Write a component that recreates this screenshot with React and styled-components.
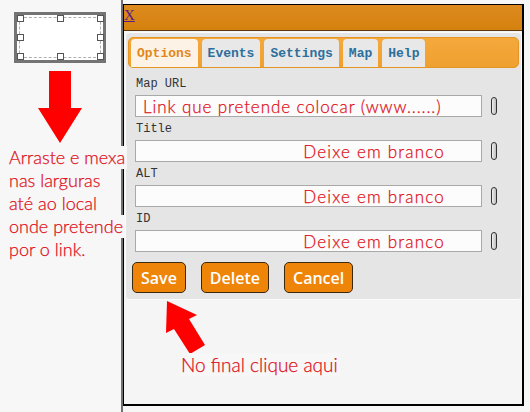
import React from "react";
import styled, { createGlobalStyle } from "styled-components";

const GlobalStyle = createGlobalStyle`
  body {
    margin: 0;
    background: #f7f7f7;
    font-family: "Liberation Sans", Arial, sans-serif;
  }
`;

const Page = styled.div`
  position: relative;
  display: flex;
  align-items: flex-start;
  width: 530px;
  height: 412px;
  overflow: hidden;
`;

const LeftCol = styled.div`
  width: 121px;
  flex-shrink: 0;
  display: flex;
  flex-direction: column;
  padding: 12px 0 0 14px;
  box-sizing: border-box;
`;

const SelectBox = styled.div`
  position: relative;
  width: 92px;
  height: 51px;
  border: 3px solid #747474;
  box-sizing: border-box;
  background: #fff;
`;

const DashedInner = styled.div`
  position: absolute;
  inset: 2px;
  border: 1px dashed #b0b0b0;
`;

const Handle = styled.span`
  position: absolute;
  width: 5px;
  height: 5px;
  background: #fff;
  border: 1px solid #555;
  left: ${(p) => p.x};
  top: ${(p) => p.y};
`;

const DownArrow = styled.svg`
  margin: 8px 0 0 24px;
  display: block;
`;

const DialogWrap = styled.div`
  flex-shrink: 0;
  border-left: 2px solid #707070;
  padding-top: 4px;
  height: 412px;
  box-sizing: border-box;
`;

const Dialog = styled.div`
  width: 401px;
  height: 402px;
  border-top: 1px solid #000;
  border-right: 2px solid #000;
  border-bottom: 2px solid #000;
  border-left: 1px solid #000;
  box-sizing: border-box;
  background: #f5f5f5;
  display: flex;
  flex-direction: column;
`;

const TitleBar = styled.div`
  height: 26px;
  flex-shrink: 0;
  background: linear-gradient(#dd8b1f, #d5810f);
  border-bottom: 1px solid #5a3a0e;
  display: flex;
  align-items: flex-start;
  padding-top: 2px;
  box-sizing: border-box;
`;

const CloseLink = styled.a`
  font-family: "Liberation Serif", "Times New Roman", serif;
  font-size: 15px;
  color: #551a8b;
  text-decoration: underline;
  cursor: pointer;
`;

const Panel = styled.div`
  margin: 1px 0 0 1px;
  height: 268px;
  flex-shrink: 0;
  background: #e5e5e5;
  border: 1px solid #fbfbfb;
  border-radius: 4px;
  padding: 4px 2px 0 2px;
  box-sizing: border-box;
`;

const TabBar = styled.div`
  height: 31px;
  display: flex;
  align-items: flex-end;
  gap: 4px;
  padding-left: 2px;
  background: linear-gradient(#f5a93c, #efa02f);
  border: 1px solid #e49523;
  border-radius: 5px;
  box-sizing: border-box;
`;

const Tab = styled.div`
  height: 28px;
  padding: 0 6px;
  display: flex;
  align-items: center;
  font-family: "Liberation Mono", "Courier New", monospace;
  font-weight: bold;
  font-size: 13px;
  color: ${(p) => (p.active ? "#e3871a" : "#2d6f9c")};
  background: ${(p) => (p.active ? "#fcf3e6" : "#e8e8e8")};
  border-radius: 4px 4px 0 0;
`;

const Fields = styled.div`
  display: flex;
  flex-direction: column;
  gap: 2px;
  padding: 6px 0 0 7px;
`;

const Field = styled.div`
  display: flex;
  flex-direction: column;
`;

const Label = styled.div`
  height: 21px;
  line-height: 21px;
  padding-left: 1px;
  font-family: "Liberation Mono", "Courier New", monospace;
  font-size: 12px;
  color: #333;
`;

const InputRow = styled.div`
  display: flex;
  align-items: center;
  gap: 9px;
`;

const TextBox = styled.div`
  width: 347px;
  height: 22px;
  box-sizing: border-box;
  background: #fcfcfc;
  border: 1px solid #a9a9a9;
  display: flex;
  align-items: center;
  justify-content: ${(p) => (p.right ? "flex-end" : "flex-start")};
  padding: ${(p) => (p.right ? "0 36px 0 0" : "0 0 0 7px")};
  font-family: Lato, "Open Sans", sans-serif;
  font-weight: 300;
  font-size: 17px;
  letter-spacing: ${(p) => (p.right ? "1.2px" : "0.9px")};
  color: #e0101a;
  -webkit-text-stroke: 0.25px #e0101a;
  white-space: nowrap;
  overflow: hidden;
`;

const Grip = styled.span`
  width: 6px;
  height: 18px;
  box-sizing: border-box;
  border: 1px solid #333;
  border-radius: 3px;
  background: linear-gradient(90deg, #f0f0f0, #bdbdbd);
`;

const Buttons = styled.div`
  display: flex;
  gap: 15px;
  margin-top: 10px;
  padding-left: 4px;
`;

const Button = styled.button`
  height: 31px;
  padding: 0 8px;
  background: #ee8408;
  border: 1px solid #3a2910;
  border-radius: 5px;
  color: #fff;
  font-family: "Open Sans", sans-serif;
  font-weight: 600;
  font-size: 16px;
`;

const Note = styled.div`
  position: absolute;
  left: ${(p) => p.x}px;
  top: ${(p) => p.y}px;
  display: flex;
  flex-direction: column;
  align-items: flex-start;
  font-family: Lato, "Open Sans", sans-serif;
  font-weight: 300;
  font-size: ${(p) => p.size}px;
  line-height: 23px;
  color: #e0101a;
  -webkit-text-stroke: 0.25px #e0101a;
  white-space: pre;
`;

const NoteLine = styled.span`
  background: #f7f7f7;
  padding-right: 2px;
`;

const UpArrow = styled.svg`
  position: absolute;
  left: 160px;
  top: 295px;
`;

const fields = [
  { label: "Map URL", text: "Link que pretende colocar (www......)" },
  { label: "Title", text: "Deixe em branco", right: true },
  { label: "ALT", text: "Deixe em branco", right: true },
  { label: "ID", text: "Deixe em branco", right: true },
];

const handles = [
  ["0px", "0px"], ["40px", "0px"], ["80px", "0px"],
  ["0px", "19px"], ["80px", "19px"],
  ["0px", "38px"], ["40px", "38px"], ["80px", "38px"],
];

const noteLines = ["Arraste e mexa", "nas larguras", "até ao local", "onde pretende", "por o link."];

export default function App() {
  return (
    <>
      <GlobalStyle />
      <Page>
        <LeftCol>
          <SelectBox>
            <DashedInner />
            {handles.map(([x, y], i) => (
              <Handle key={i} x={x} y={y} />
            ))}
          </SelectBox>
          <DownArrow width="44" height="72" viewBox="0 0 44 72">
            <polygon points="11,0 33,0 33,37 44,37 22,72 0,37 11,37" fill="#ff0000" />
          </DownArrow>
        </LeftCol>

        <DialogWrap>
          <Dialog>
            <TitleBar>
              <CloseLink>X</CloseLink>
            </TitleBar>
            <Panel>
              <TabBar>
                <Tab active>Options</Tab>
                <Tab>Events</Tab>
                <Tab>Settings</Tab>
                <Tab>Map</Tab>
                <Tab>Help</Tab>
              </TabBar>
              <Fields>
                {fields.map((f) => (
                  <Field key={f.label}>
                    <Label>{f.label}</Label>
                    <InputRow>
                      <TextBox right={f.right}>{f.text}</TextBox>
                      <Grip />
                    </InputRow>
                  </Field>
                ))}
              </Fields>
              <Buttons>
                <Button>Save</Button>
                <Button>Delete</Button>
                <Button>Cancel</Button>
              </Buttons>
            </Panel>
          </Dialog>
        </DialogWrap>

        <Note x={9} y={146} size={18}>
          {noteLines.map((l) => (
            <NoteLine key={l}>{l}</NoteLine>
          ))}
        </Note>
        <UpArrow width="50" height="62" viewBox="0 0 50 62">
          <polygon points="7,6 37,20 29,24 45,50 30,59 14,34 6,38" fill="#ff0000" />
        </UpArrow>
        <Note x={181} y={353} size={19}>
          <NoteLine>No final clique aqui</NoteLine>
        </Note>
      </Page>
    </>
  );
}
